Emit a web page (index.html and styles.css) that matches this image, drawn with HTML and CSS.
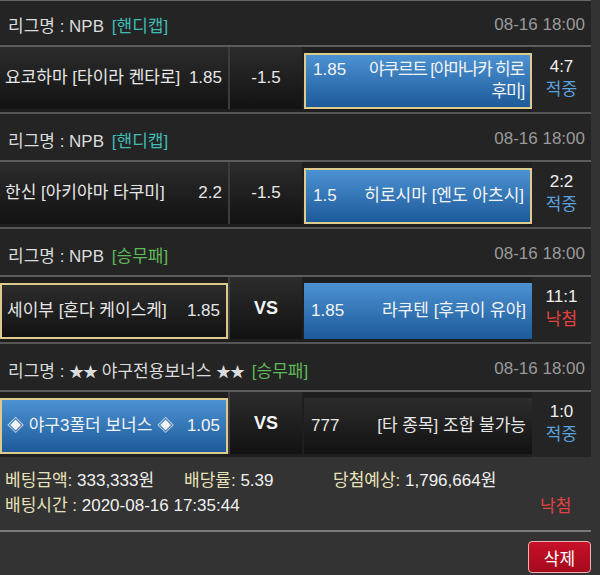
FILE: index.html
```html
<!DOCTYPE html>
<html lang="ko">
<head>
<meta charset="utf-8">
<link rel="stylesheet" href="styles.css">
</head>
<body>
<div class="list">
  <div class="head first">
    <div>리그명 : NPB <span class="tag teal">[핸디캡]</span></div>
    <div class="date">08-16 18:00</div>
  </div>
  <div class="match">
    <div class="team dark"><span class="name">요코하마 [타이라 켄타로]</span><span class="odd">1.85</span></div>
    <div class="mid dark">-1.5</div>
    <div class="team blue gold right"><div class="txt tight"><span class="odd">1.85</span>야쿠르트 [야마나카 히로<br>후미]</div></div>
    <div class="res"><span>4:7</span><span class="hit">적중</span></div>
  </div>
  <div class="head">
    <div>리그명 : NPB <span class="tag teal">[핸디캡]</span></div>
    <div class="date">08-16 18:00</div>
  </div>
  <div class="match">
    <div class="team dark"><span class="name">한신 [아키야마 타쿠미]</span><span class="odd">2.2</span></div>
    <div class="mid dark">-1.5</div>
    <div class="team blue gold right"><div class="txt"><span class="odd">1.5</span>히로시마 [엔도 아츠시]</div></div>
    <div class="res"><span>2:2</span><span class="hit">적중</span></div>
  </div>
  <div class="head">
    <div>리그명 : NPB <span class="tag green">[승무패]</span></div>
    <div class="date">08-16 18:00</div>
  </div>
  <div class="match">
    <div class="team dark gold"><span class="name">세이부 [혼다 케이스케]</span><span class="odd">1.85</span></div>
    <div class="mid dark vs">VS</div>
    <div class="team blue right"><div class="txt"><span class="odd">1.85</span>라쿠텐 [후쿠이 유야]</div></div>
    <div class="res"><span>11:1</span><span class="miss">낙첨</span></div>
  </div>
  <div class="head">
    <div>리그명 : <span class="star">★★</span> 야구전용보너스 <span class="star">★★</span> <span class="tag green">[승무패]</span></div>
    <div class="date">08-16 18:00</div>
  </div>
  <div class="match last">
    <div class="team blue gold"><span class="name">◈ 야구3폴더 보너스 ◈</span><span class="odd">1.05</span></div>
    <div class="mid dark vs">VS</div>
    <div class="team dark right"><div class="txt"><span class="odd">777</span>[타 종목] 조합 불가능</div></div>
    <div class="res"><span>1:0</span><span class="hit">적중</span></div>
  </div>
</div>
<div class="info">
  <div class="info-row">
    <div class="c1"><span class="lbl">베팅금액:</span> 333,333원</div>
    <div class="c2"><span class="lbl">배당률:</span> 5.39</div>
    <div class="c3"><span class="lbl">당첨예상:</span> 1,796,664원</div>
  </div>
  <div class="info-row">
    <div class="c12"><span class="lbl">배팅시간 :</span> 2020-08-16 17:35:44</div>
    <div class="c4 miss">낙첨</div>
  </div>
</div>
<div class="actions">
  <button class="del">삭제</button>
</div>
</body>
</html>
```
FILE: styles.css
```css
* { box-sizing: border-box; }
body {
  margin: 0;
  background: #333333;
  font-family: "Liberation Sans", "Noto Sans CJK KR", sans-serif;
  font-size: 17px;
  color: #e6e6e6;
}
.list {
  width: 591px;
  background: #242424;
}
.head {
  height: 48px;
  padding: 4px 6px 0 8px;
  display: flex;
  align-items: center;
  justify-content: space-between;
  border-bottom: 2px solid #5c5c5c;
  color: #dcdcdc;
}
.head.first {
  height: 47px;
  padding-top: 3px;
  border-top: 1px solid #666;
}
.tag { margin-left: 3px; }
.star { font-size: 15px; letter-spacing: -1px; }
.teal { color: #3fbcb4; }
.green { color: #5fb95a; }
.date { color: #9a9a9a; }
.match {
  display: flex;
  border-bottom: 2px solid #555;
  background: #1e1e1e;
}
.match.last { border-bottom: none; }
.team, .mid {
  margin: 0 0 3px;
}
.team {
  width: 228px;
  display: flex;
  align-items: center;
  justify-content: space-between;
  padding: 4px 6px 4px 5px;
  line-height: 22px;
}
.team.gold, .team.blue, .team.right {
  margin-top: 6px;
  height: 56px;
}
.team.right { padding: 4px 6px 4px 7px; }
.txt {
  width: 100%;
  text-align: right;
}
.txt .odd {
  float: left;
  margin-right: 4px;
  letter-spacing: 0;
}
.txt.tight { letter-spacing: -1.2px; white-space: nowrap; }
.team .odd { white-space: nowrap; }
.dark {
  background: linear-gradient(#2c2c2c, #121212);
}
.blue {
  background: linear-gradient(#4c92d3, #1d5a9a);
  color: #f4f4f4;
}
.gold { border: 2px solid #dccb8c; }
.mid {
  width: 74px;
  margin-right: 2px;
  border-left: 2px solid #3c3c3c;
  display: flex;
  align-items: center;
  justify-content: center;
  color: #e8e8e8;
}
.vs { font-weight: bold; font-size: 18px; color: #f2f2f2; }
.res {
  flex: 1;
  background: #242424;
  display: flex;
  flex-direction: column;
  align-items: center;
  justify-content: center;
  line-height: 23px;
  color: #f0f0f0;
  padding-bottom: 3px;
}
.hit { color: #5aa2df; }
.miss { color: #e2423f; }
.info {
  width: 591px;
  height: 75px;
  padding: 11px 5px 0;
  border-bottom: 2px solid #7a7a7a;
}
.info-row {
  display: flex;
  line-height: 25px;
  color: #f0f0f0;
}
.lbl { color: #e9e2b8; }
.c1 { width: 179px; }
.c2 { width: 149px; }
.c12 { width: 535px; }
.c4 { padding-top: 1px; }
.actions {
  width: 591px;
  display: flex;
  justify-content: flex-end;
  padding-top: 9px;
}
.del {
  width: 63px;
  height: 32px;
  border: 1px solid #e9b3b3;
  border-radius: 4px;
  background: linear-gradient(#c8102a, #a50a1c);
  color: #fff;
  font-family: "Noto Sans CJK KR", sans-serif;
  font-size: 17px;
  padding: 0;
}
```
